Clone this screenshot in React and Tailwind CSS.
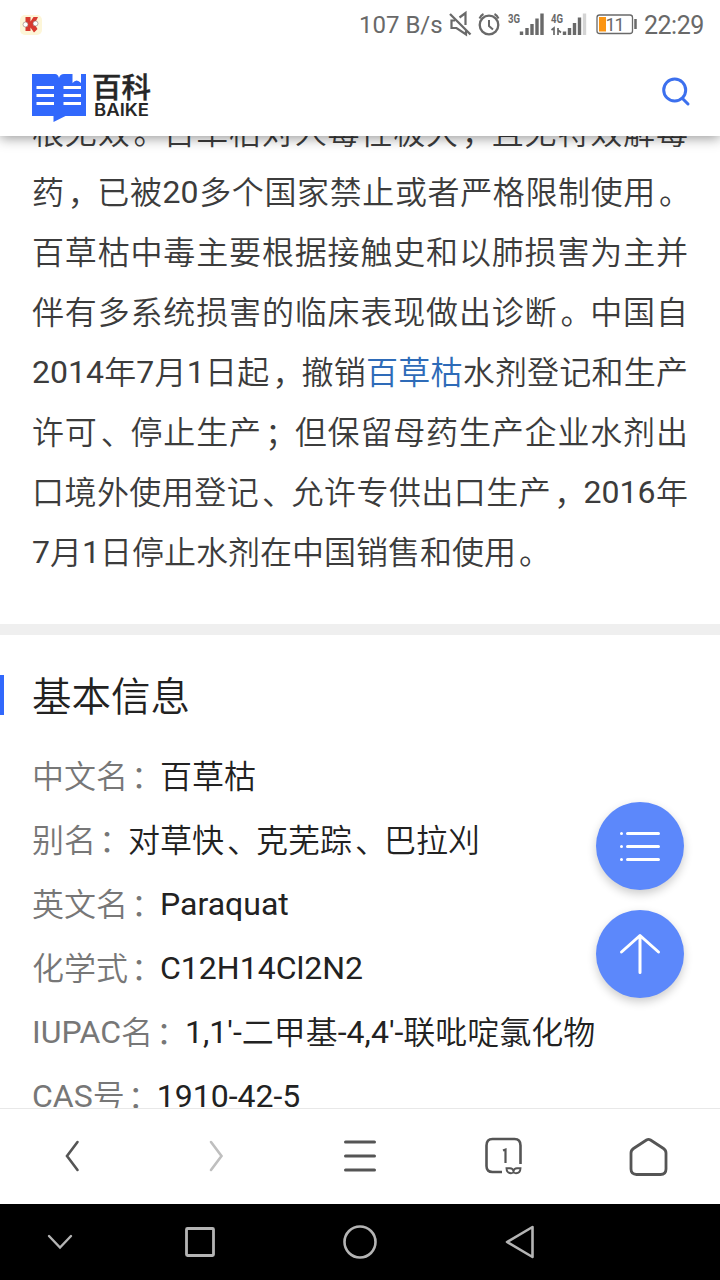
const intro = [
  '根无效。百草枯对人毒性极大，且无特效解毒',
  '药，已被20多个国家禁止或者严格限制使用。',
  '百草枯中毒主要根据接触史和以肺损害为主并',
  '伴有多系统损害的临床表现做出诊断。中国自',
  '2014年7月1日起，撤销{百草枯}水剂登记和生产',
  '许可、停止生产；但保留母药生产企业水剂出',
  '口境外使用登记、允许专供出口生产，2016年',
  '7月1日停止水剂在中国销售和使用。',
]

const facts = [
  { label: '中文名', value: '百草枯' },
  { label: '别名', value: '对草快、克芜踪、巴拉刈' },
  { label: '英文名', value: 'Paraquat' },
  { label: '化学式', value: 'C12H14Cl2N2' },
  { label: 'IUPAC名', value: "1,1'-二甲基-4,4'-联吡啶氯化物" },
  { label: 'CAS号', value: '1910-42-5' },
]

// Latin runs keep the regular weight, Chinese runs are lighter and 1px lower
function Text({ children }) {
  return children.split(/([\x20-\x7e]+|[，。、：；])/).filter(Boolean).map((part, i) => {
    if (/^[\x20-\x7e]/.test(part)) return <span key={i} className="font-normal">{part}</span>
    if (/^[，、；]$/.test(part)) return <span key={i} className="ml-[3px] mr-[-3px] align-[-2px] font-[350]">{part}</span>
    if (/^[。：]$/.test(part)) return <span key={i} className="ml-[3px] mr-[-3px] align-[-1px] font-[350]">{part}</span>
    return <span key={i} className="align-[-1px] font-[350]">{part}</span>
  })
}

function IntroLine({ text, last }) {
  const [before, link, after] = text.split(/[{}]/)
  return (
    <div className={last ? 'h-[60px] whitespace-nowrap' : 'h-[60px] whitespace-nowrap [text-align-last:justify]'}>
      <Text>{before}</Text>
      {link && <a className="text-[#2e6bb8]"><Text>{link}</Text></a>}
      {after && <Text>{after}</Text>}
    </div>
  )
}

function StatusBar() {
  return (
    <div className="flex h-12 items-center justify-between pl-5 pr-4 text-[#696969]">
      <svg width="22" height="24" viewBox="0 0 22 24">
        <rect width="22" height="20" y="3" rx="5" fill="#fdf6d8" />
        <path d="M5.500 5h5v4.500L13.500 5h4.500l-3.500 7 3 5-3.500 3.500-3.500-5V19H5.500z" fill="#d8392f" />
        <circle cx="5.500" cy="12.500" r="2.500" fill="#fff" stroke="#8f7a72" strokeWidth=".6" />
        <circle cx="15.500" cy="11.500" r="2.500" fill="#fff" stroke="#8f7a72" strokeWidth=".6" />
      </svg>
      <div className="flex items-center">
        <span className="w-[90px] whitespace-nowrap pt-0.5 text-[24px] leading-none">107 B/s</span>
        <svg width="188" height="28" viewBox="449 10 188 28" fill="none" stroke="currentColor" strokeWidth="2">
          <path d="M450 14l20.500 20.500" strokeWidth="2.300" />
          <path d="M455 20.500h-3.500v7.500h5l9.500 6.500v-4M459.500 17.500l6-4.500v12" strokeWidth="2.200" />
          <circle cx="489" cy="25" r="9.300" strokeWidth="2.300" />
          <path d="M489 20v6l4 3.500M479.500 18.500a9 9 0 0 1 4-4.500M498.500 18.500a9 9 0 0 0-4-4.500" />
          <g strokeWidth="3.400">
            <path d="M521.500 31.500v3.500M527 28v7M532 24v11M537 18.500v16.500M542 13.500v21.500" />
            <path d="M564.500 31.500v3.500M569.500 28v7M574.500 23v12M579.500 17.500v17.500" />
            <path d="M584.500 13.500v21.500" stroke="#d4d4d4" />
          </g>
          <path d="M551.500 30l2.500-2v7M558 28v7M558 30l3 2.500" strokeWidth="1.700" />
          <g fill="currentColor" stroke="none" className="font-[Roboto]" fontSize="13" fontWeight="700">
            <text x="508" y="23" textLength="12" lengthAdjust="spacingAndGlyphs">3G</text>
            <text x="551" y="23" textLength="12" lengthAdjust="spacingAndGlyphs">4G</text>
          </g>
          <rect x="597" y="15" width="35.500" height="18.500" rx="2.500" strokeWidth="1.300" />
          <rect x="599" y="17" width="7" height="14.500" fill="#fb9512" stroke="none" />
          <path d="M635.500 19v10" strokeWidth="2.500" />
          <text x="605.500" y="31" textLength="19" fill="currentColor" stroke="none" className="font-[Roboto]" fontSize="18">11</text>
        </svg>
        <span className="w-[67px] pl-[7px] pt-0.5 text-[25px] leading-none tracking-[-0.5px]">22:29</span>
      </div>
    </div>
  )
}

function Logo() {
  return (
    <svg width="124" height="50" viewBox="32 73 124 50">
      <path d="M32 74h23q3 0 4 4 1-4 5-4h8.500v9q4-5 8.500 0v-9H86v42H65.500L53.500 122v-6H32z" fill="#3168fc" />
      <path d="M73.500 74v7.500l3.500-2.500 4 2.500V74z" fill="#fff" />
      <path d="M36.500 87.500H54M36.500 95.500H54M36.500 103.500H54M63.500 87.500H81M63.500 95.500H81M63.500 103.500H81" stroke="#fff" strokeWidth="3" />
      <g fill="#262626">
        <text x="92" y="97.500" fontSize="28" fontWeight="500" stroke="#262626" strokeWidth=".4" textLength="59" lengthAdjust="spacingAndGlyphs" className="font-['Noto_Sans_CJK_SC',sans-serif]">百科</text>
        <text x="94" y="116" fontSize="17" fontWeight="600" textLength="55" lengthAdjust="spacingAndGlyphs" className="font-[Inter,sans-serif]">BAIKE</text>
      </g>
    </svg>
  )
}

function Header() {
  return (
    <header className="relative z-10 h-[136px] shrink-0 bg-white shadow-[0_2px_12px_rgba(0,0,0,0.42)]">
      <StatusBar />
      <div className="flex items-start justify-between px-8 pt-[25px]">
        <Logo />
        <svg className="-mr-[3px] mt-[3px]" width="32" height="32" viewBox="0 0 32 32" fill="none" stroke="#3c70ee" strokeWidth="3" strokeLinecap="round">
          <circle cx="15.700" cy="14" r="11" />
          <path d="M24 23l5 5" />
        </svg>
      </div>
    </header>
  )
}

function FloatingButtons() {
  return (
    <div className="absolute left-[596px] top-[802px] z-10 flex flex-col gap-5">
      <button className="flex size-[88px] items-center justify-center rounded-full bg-[#5c88fb] shadow-[0_4px_10px_rgba(0,0,0,0.2)]">
        <svg width="44" height="34" viewBox="0 0 44 34" stroke="#fff" strokeWidth="3" strokeLinecap="round">
          <path d="M9.500 4.500h31M9.500 17.500h31M9.500 30.500h31M3.500 4.500h0M3.500 17.500h0M3.500 30.500h0" />
        </svg>
      </button>
      <button className="flex size-[88px] items-center justify-center rounded-full bg-[#5c88fb] shadow-[0_4px_10px_rgba(0,0,0,0.2)]">
        <svg width="44" height="44" viewBox="0 0 44 44" fill="none" stroke="#fff" strokeWidth="3" strokeLinecap="round" strokeLinejoin="round">
          <path d="M22 3.500v37M3.500 20L22 3.500l18.500 16.500" />
        </svg>
      </button>
    </div>
  )
}

function Toolbar() {
  return (
    <nav className="grid h-24 shrink-0 grid-cols-5 place-items-center border-t border-[#e8e8e8] bg-white text-[#555]">
      <svg width="40" height="40" viewBox="0 0 40 40" fill="none" stroke="currentColor" strokeWidth="2.600" strokeLinecap="round">
        <path d="M25.500 5L15 19l10.500 14" />
      </svg>
      <svg width="40" height="40" viewBox="0 0 40 40" fill="none" stroke="#bfbfbf" strokeWidth="2.600" strokeLinecap="round">
        <path d="M15 5l10.500 14L15 33" />
      </svg>
      <svg width="40" height="40" viewBox="0 0 40 40" fill="none" stroke="currentColor" strokeWidth="3" strokeLinecap="round">
        <path d="M5.500 5h29M5.500 19h29M5.500 33h29" />
      </svg>
      <svg width="40" height="40" viewBox="0 0 40 40" fill="none" stroke="currentColor" strokeWidth="2.600">
        <path d="M18 35H8.500q-6 0-6-6V8.500q0-6.500 6-6.500h22q6 0 6 6.500V27" />
        <path d="M19 13.500l2.500-1v13.500" strokeWidth="2.200" />
        <path d="M22.500 31.200h3.500q3 0 3.500 3 .5-3 3.500-3h3.500q-.2 5-4.500 5-2 0-2.500-1.500-.5 1.500-2.500 1.500-4.300 0-4.500-5z" strokeWidth="1.900" />
      </svg>
      <svg width="40" height="40" viewBox="0 0 40 40" fill="none" stroke="currentColor" strokeWidth="2.800" strokeLinejoin="round">
        <path d="M18.500 3q2-1.200 4 0l13 8.500q2.500 1.700 2.500 4.500v16q0 5.500-5.500 5.500h-24Q3 37.500 3 32V16q0-2.800 2.500-4.500z" />
      </svg>
    </nav>
  )
}

function SystemNav() {
  return (
    <div className="flex h-[76px] shrink-0 items-center gap-[120px] bg-black pl-10">
      <svg className="-mr-5" width="40" height="40" viewBox="0 0 40 40" fill="none" stroke="#b4b4b4" strokeWidth="2.400" strokeLinecap="round">
        <path d="M9 14l11 11.500L31 14" />
      </svg>
      <svg width="40" height="40" viewBox="0 0 40 40" fill="none" stroke="#b4b4b4" strokeWidth="2.800">
        <rect x="6.500" y="6.500" width="27" height="27" rx="1" />
      </svg>
      <svg width="40" height="40" viewBox="0 0 40 40" fill="none" stroke="#b4b4b4" strokeWidth="2.600">
        <circle cx="20" cy="20" r="15.500" />
      </svg>
      <svg width="40" height="40" viewBox="0 0 40 40" fill="none" stroke="#b4b4b4" strokeWidth="2.600" strokeLinejoin="round">
        <path d="M32.500 5v30L7 20z" />
      </svg>
    </div>
  )
}

export default function App() {
  return (
    <div className="relative flex h-[1280px] w-[720px] flex-col overflow-hidden bg-white font-[Roboto,'Noto_Sans_CJK_SC',sans-serif]">
      <Header />
      <main className="min-h-0 flex-1 overflow-hidden">
        <section className="-mt-[34px] px-8 pb-[42px] text-[32px] leading-[60px] text-[#3c3c3c]">
          {intro.map((line, i) => (
            <IntroLine key={line} text={line} last={i === intro.length - 1} />
          ))}
        </section>
        <div className="h-[11px] bg-[#efefef]" />
        <section className="pt-10">
          <h2 className="h-10 border-l-4 border-[#3168fc] pl-7 pt-0.5 text-[39.5px] leading-10 text-[#222]">
            <Text>基本信息</Text>
          </h2>
          <dl className="px-8 pt-[30px] text-[32px] leading-[63px]">
            {facts.map((fact) => (
              <div key={fact.label} className="flex h-16 whitespace-nowrap">
                <dt className="text-[#777]">
                  <Text>{fact.label + '：'}</Text>
                </dt>
                <dd className="text-[#222]">
                  <Text>{fact.value}</Text>
                </dd>
              </div>
            ))}
          </dl>
        </section>
      </main>
      <FloatingButtons />
      <Toolbar />
      <SystemNav />
    </div>
  )
}
